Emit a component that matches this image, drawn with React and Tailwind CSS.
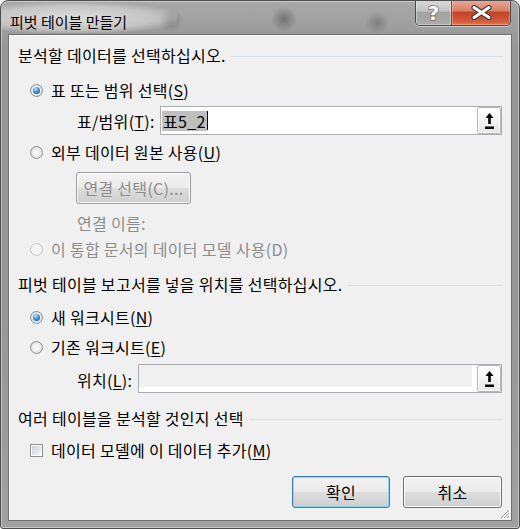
import React from "react";

const U = ({ children }) => (
  <span className="underline underline-offset-[2px] decoration-1">{children}</span>
);

function Radio({ checked, disabled }) {
  return (
    <span
      className={
        disabled
          ? "w-[13px] h-[13px] rounded-full border border-[#c4c4c4] bg-[#f4f4f4] shrink-0 flex items-center justify-center"
          : "w-[13px] h-[13px] rounded-full border border-[#8e8f8f] bg-[radial-gradient(circle_at_50%_50%,#ffffff_0%,#f2f2f2_35%,#d2d2d2_100%)] shrink-0 flex items-center justify-center"
      }
    >
      {checked && (
        <span className="w-[7px] h-[7px] rounded-full bg-[radial-gradient(circle_at_40%_30%,#b4e3ff_0%,#3d96d8_45%,#0b3d68_100%)]" />
      )}
    </span>
  );
}

function RadioRow({ checked, disabled, mt, children }) {
  return (
    <div className={"flex items-center h-[20px] pl-[21px] " + mt}>
      <Radio checked={checked} disabled={disabled} />
      <span className={disabled ? "ml-[8px] text-[#8d8d8d] whitespace-nowrap" : "ml-[8px] whitespace-nowrap"}>
        {children}
      </span>
    </div>
  );
}

function Heading({ mt, children }) {
  return (
    <div className={"flex items-center h-[20px] pl-[9px] pr-[8px] " + mt}>
      <span className="whitespace-nowrap">{children}</span>
      <span className="flex-1 h-px bg-[#d5dfe5] ml-[5px] mt-[2px]" />
    </div>
  );
}

function RefButton() {
  return (
    <div className="w-[24px] h-full shrink-0 rounded-[2px] border border-[#b5b5b5] bg-[linear-gradient(#ffffff_0%,#f3f3f3_50%,#e6e6e6_100%)] shadow-[inset_0_0_0_1px_#ffffff] flex items-center justify-center">
      <svg width="9" height="16" viewBox="0 0 9 16">
        <polygon points="4.5,0 8.5,5 5.8,5 5.8,11 3.2,11 3.2,5 0.5,5" fill="#000" />
        <rect x="0" y="13.5" width="9" height="2.5" fill="#000" />
      </svg>
    </div>
  );
}

const btnBase =
  "h-[32px] rounded-[3px] border bg-[linear-gradient(#f2f2f2_0%,#ebebeb_50%,#dddddd_51%,#cfcfcf_100%)]";

export default function App() {
  return (
    <div className="w-[520px] h-[529px] flex flex-col rounded-t-[8px] rounded-b-[3px] border border-[#4e4e4e] overflow-hidden font-['Noto_Sans_CJK_KR','Noto_Sans',sans-serif] text-black shadow-[inset_0_0_0_1px_rgba(255,255,255,0.4)] bg-[radial-gradient(circle_at_170px_20px,rgba(70,70,70,0.35),rgba(70,70,70,0)_12px),radial-gradient(circle_at_283px_18px,rgba(60,60,60,0.45),rgba(60,60,60,0)_13px),radial-gradient(circle_at_376px_22px,rgba(70,70,70,0.35),rgba(70,70,70,0)_12px),linear-gradient(#a9a9a9_0%,#979797_8%,#979797_60%,#a0a0a0_100%)]">
      {/* Title bar */}
      <div className="h-[33px] flex items-start shrink-0">
        <div className="ml-[1px] mt-[2px] h-[30px] w-[175px] pl-[8px] pt-[6px] bg-[radial-gradient(ellipse_at_40%_50%,rgba(228,228,228,0.9)_0%,rgba(215,215,215,0.65)_55%,rgba(200,200,200,0)_78%)]">
          <span className="text-[15px] leading-[20px] text-black whitespace-nowrap">피벗 테이블 만들기</span>
        </div>
        <div className="ml-auto mr-[8px] -mt-px flex h-[26px] rounded-b-[5px] border border-t-0 border-[#4a4a4a] overflow-hidden shadow-[0_1px_0_rgba(255,255,255,0.5)]">
          <div className="w-[36px] h-full flex items-center justify-center border-r border-[#5a5a5a] bg-[linear-gradient(#dadada_0%,#c2c2c2_45%,#a2a2a2_50%,#acacac_100%)] shadow-[inset_0_0_0_1px_rgba(255,255,255,0.35)]">
            <span className="font-['DejaVu_Sans',sans-serif] font-bold text-[20px] leading-none text-white [-webkit-text-stroke:1.2px_#555555] [paint-order:stroke_fill]">?</span>
          </div>
          <div className="w-[58px] h-full flex items-center justify-center bg-[linear-gradient(#e9ab99_0%,#d98068_42%,#c4432a_50%,#d55a3b_85%,#e07a55_100%)] shadow-[inset_0_0_0_1px_rgba(255,220,200,0.35)]">
            <svg width="21" height="15" viewBox="0 0 21 15">
              <path d="M3 2.5 L18 12.5 M18 2.5 L3 12.5" stroke="#3d3d3d" strokeWidth="5.2" strokeLinecap="round" />
              <path d="M3 2.5 L18 12.5 M18 2.5 L3 12.5" stroke="#ffffff" strokeWidth="3" strokeLinecap="round" />
            </svg>
          </div>
        </div>
      </div>

      {/* Client area */}
      <div className="relative mx-[7px] mb-[7px] flex-1 flex flex-col border border-[#6f6f6f] bg-[#f0f0f0] shadow-[inset_1px_1px_0_#ffffff] text-[16px] tracking-[0.3px] leading-[20px]">
        <Heading mt="mt-[10px]">분석할 데이터를 선택하십시오.</Heading>

        <RadioRow checked mt="mt-[15px]">
          표 또는 범위 선택(<U>S</U>)
        </RadioRow>

        <div className="flex items-center h-[29px] mt-[6px] pl-[68px] pr-[9px]">
          <span className="w-[83px] whitespace-nowrap">
            표/범위(<U>T</U>):
          </span>
          <div className="flex-1 h-full flex border border-[#abadb3] bg-white">
            <div className="flex-1 flex items-center pl-[1px]">
              <span className="bg-[#bfbfbf] h-[20px] px-[1px] leading-[20px] whitespace-nowrap">표5_2</span>
              <span className="w-px h-[19px] bg-black" />
            </div>
            <RefButton />
          </div>
        </div>

        <RadioRow mt="mt-[7px]">
          외부 데이터 원본 사용(<U>U</U>)
        </RadioRow>

        <div className="flex h-[32px] mt-[10px] pl-[67px]">
          <div className={btnBase + " w-[115px] border-[#9c9c9c] shadow-[inset_0_0_0_1px_#fbfbfb] text-[#8d8d8d] flex items-center justify-center whitespace-nowrap"}>
            연결 선택(C)...
          </div>
        </div>

        <div className="h-[20px] mt-[9px] pl-[68px] text-[#8d8d8d] whitespace-nowrap">연결 이름:</div>

        <RadioRow disabled mt="mt-[6px]">
          이 통합 문서의 데이터 모델 사용(D)
        </RadioRow>

        <Heading mt="mt-[15px]">피벗 테이블 보고서를 넣을 위치를 선택하십시오.</Heading>

        <RadioRow checked mt="mt-[13px]">
          새 워크시트(<U>N</U>)
        </RadioRow>

        <RadioRow mt="mt-[10px]">
          기존 워크시트(<U>E</U>)
        </RadioRow>

        <div className="flex items-center h-[29px] mt-[7px] pl-[68px] pr-[9px]">
          <span className="w-[61px] pt-[3px] whitespace-nowrap">
            위치(<U>L</U>):
          </span>
          <div className="flex-1 h-full flex border border-[#abadb3] bg-white">
            <div className="flex-1 bg-[#f0f0f0] mr-[5px] mb-[5px]" />
            <RefButton />
          </div>
        </div>

        <Heading mt="mt-[15px]">여러 테이블을 분석할 것인지 선택</Heading>

        <div className="flex items-center h-[20px] mt-[12px] pl-[21px]">
          <span className="w-[13px] h-[13px] border border-[#8e8f8f] bg-white p-[1px] shrink-0">
            <span className="block w-full h-full bg-[linear-gradient(135deg,#cbcfd5_0%,#e4e6e9_60%,#f6f6f6_100%)]" />
          </span>
          <span className="ml-[8px] whitespace-nowrap">
            데이터 모델에 이 데이터 추가(<U>M</U>)
          </span>
        </div>

        <div className="flex justify-end gap-[13px] h-[32px] mt-[16px] pr-[9px]">
          <div className={btnBase + " w-[98px] border-[#3c7fb1] shadow-[inset_0_0_0_1px_rgba(110,210,250,0.8)] flex items-center justify-center"}>
            확인
          </div>
          <div className={btnBase + " w-[99px] border-[#707070] shadow-[inset_0_0_0_1px_#fbfbfb] flex items-center justify-center"}>
            취소
          </div>
        </div>

        <svg className="absolute right-[1px] bottom-[1px]" width="11" height="11" viewBox="0 0 11 11">
          <path d="M10 2 L2 10 M10 5 L5 10 M10 8 L8 10" stroke="#9a9a9a" strokeWidth="1" />
          <path d="M10.8 2.8 L2.8 10.8 M10.8 5.8 L5.8 10.8 M10.8 8.8 L8.8 10.8" stroke="#ffffff" strokeWidth="1" />
        </svg>
      </div>
    </div>
  );
}
